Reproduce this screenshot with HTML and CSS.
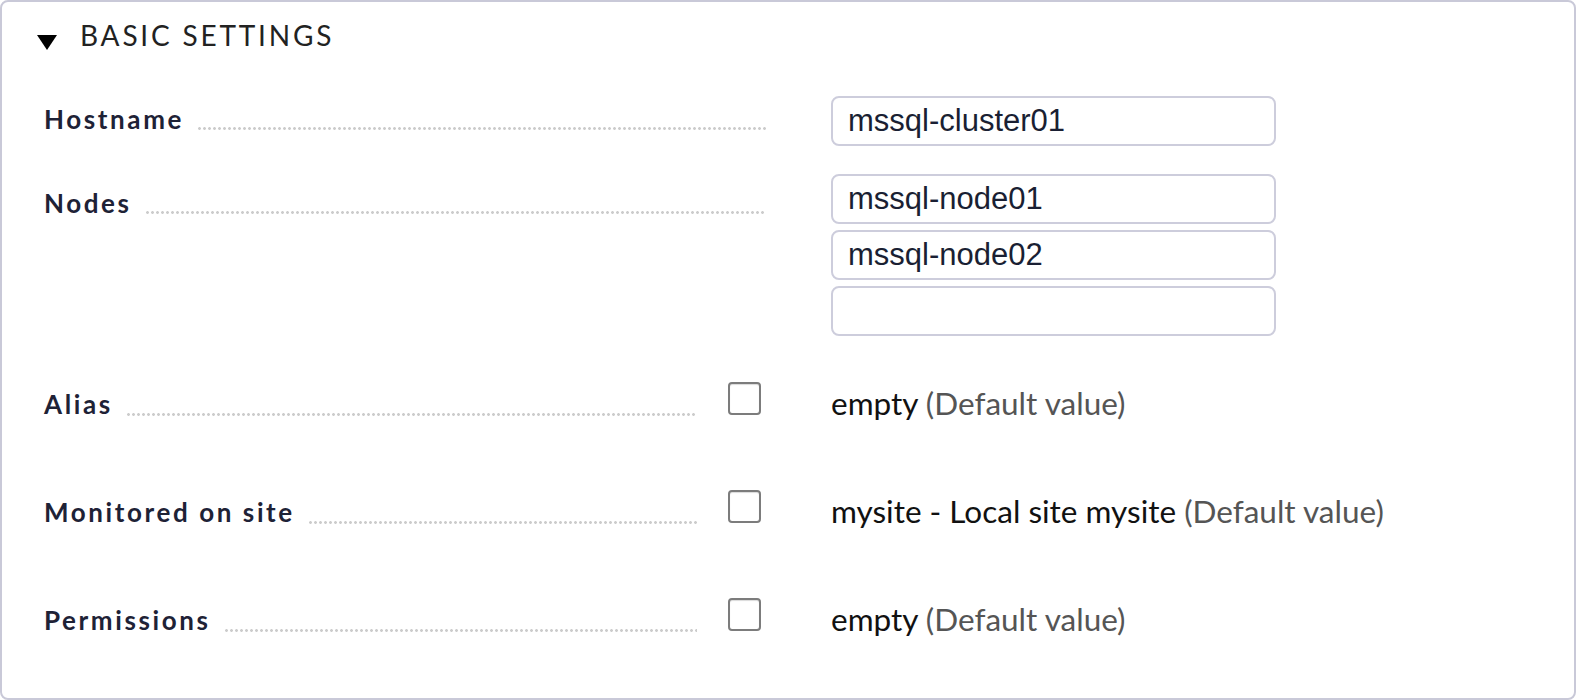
FILE: index.html
```html
<!DOCTYPE html>
<html>
<head>
<meta charset="utf-8">
<link rel="stylesheet" href="styles.css">
</head>
<body>
<div class="box">
  <div class="header">
    <svg class="tri" width="20" height="15" viewBox="0 0 20 15"><polygon points="0,0 20,0 10,15" fill="#000"/></svg>
    <span class="title">BASIC SETTINGS</span>
  </div>
  <div class="row row-input">
    <div class="label"><span class="ltext">Hostname</span><span class="dots"></span></div>
    <div class="content">
      <div class="input">mssql-cluster01</div>
    </div>
  </div>
  <div class="row row-input row-nodes">
    <div class="label"><span class="ltext">Nodes</span><span class="dots"></span></div>
    <div class="content">
      <div class="input">mssql-node01</div>
      <div class="input">mssql-node02</div>
      <div class="input"></div>
    </div>
  </div>
  <div class="row row-check row-first">
    <div class="label"><span class="ltext">Alias</span><span class="dots"></span><span class="cb"></span></div>
    <div class="content value">empty <span class="def">(Default value)</span></div>
  </div>
  <div class="row row-check">
    <div class="label"><span class="ltext">Monitored on site</span><span class="dots"></span><span class="cb"></span></div>
    <div class="content value">mysite - Local site mysite <span class="def">(Default value)</span></div>
  </div>
  <div class="row row-check">
    <div class="label"><span class="ltext">Permissions</span><span class="dots"></span><span class="cb"></span></div>
    <div class="content value">empty <span class="def">(Default value)</span></div>
  </div>
</div>
</body>
</html>
```
FILE: styles.css
```css
html, body {
  margin: 0;
  padding: 0;
  background: #fff;
}
.box {
  box-sizing: border-box;
  width: 1576px;
  height: 700px;
  border: 2px solid #c9c9d8;
  border-radius: 8px;
  overflow: hidden;
  font-family: Lato, "Noto Sans", sans-serif;
}
.header {
  display: flex;
  align-items: flex-start;
  height: 94px;
  padding-left: 35px;
  box-sizing: border-box;
}
.tri {
  display: block;
  margin-top: 33px;
  flex: none;
}
.title {
  margin-left: 23px;
  margin-top: 17px;
  font-size: 28px;
  line-height: 32px;
  letter-spacing: 2.8px;
  color: #222;
}
.row {
  display: flex;
  align-items: flex-start;
  padding-left: 42px;
}
.label {
  width: 722px;
  flex: none;
  display: flex;
  align-items: flex-end;
  font-weight: 700;
  font-size: 26px;
  letter-spacing: 2.6px;
  color: #1e2236;
}
.row-input .label {
  height: 46px;
  line-height: 46px;
}
.row-nodes .label {
  padding-top: 6px;
}
.ltext {
  white-space: nowrap;
}
.dots {
  flex: 1;
  height: 3px;
  margin-left: 13px;
  margin-bottom: 12px;
  background-image: radial-gradient(circle, #cccccc 1.2px, transparent 1.6px);
  background-size: 5px 3px;
  background-repeat: repeat-x;
}
.content {
  margin-left: 65px;
}
.input {
  box-sizing: border-box;
  width: 445px;
  height: 50px;
  border: 2px solid #cdcddc;
  border-radius: 8px;
  padding-left: 15px;
  font-family: "Liberation Sans", Arial, sans-serif;
  font-size: 31px;
  line-height: 46px;
  color: #1a1f33;
}
.input + .input {
  margin-top: 6px;
}
.row-nodes {
  margin-top: 28px;
}
.row-check {
  height: 108px;
}
.row-first {
  margin-top: 46px;
}
.row-check .label {
  line-height: 45px;
  height: 45px;
}
.row-check .dots {
  margin-right: 31px;
  margin-bottom: 11px;
}
.cb {
  box-sizing: border-box;
  width: 33px;
  height: 33px;
  flex: none;
  align-self: flex-start;
  border: 2px solid #7c7c7c;
  border-radius: 4px;
  background: #fff;
  box-shadow: inset 0 1px 1px rgba(0,0,0,0.15);
  margin-right: 5px;
}
.value {
  font-size: 31.5px;
  line-height: 42px;
  color: #111;
}
.def {
  color: #555;
}
```
